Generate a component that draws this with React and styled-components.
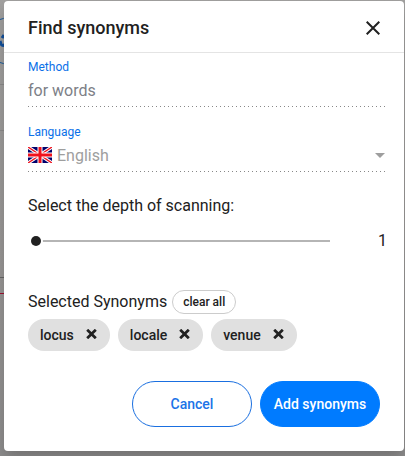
import React, { useState } from "react";
import styled, { createGlobalStyle } from "styled-components";

const GlobalStyle = createGlobalStyle`
  * {
    box-sizing: border-box;
  }

  body {
    margin: 0;
    background: #8b8988;
    color: #212121;
    font-family: Roboto, "Liberation Sans", sans-serif;
  }

  button, input, select {
    font-family: inherit;
  }
`;

const Backdrop = styled.div`
  position: relative;
  min-height: 100vh;
  padding: 1px 1px 5px 4px;
  overflow: hidden;
  background: linear-gradient(#a2a1a0, #999796 60%, #8f8e8e);
`;

// page content that shows at the edge of the dialog
const PageEdge = styled.svg`
  position: absolute;
  top: 0;
  left: 0;
`;

const Dialog = styled.section`
  position: relative;
  background: #fff;
  border-radius: 4px;
  box-shadow: 0 8px 16px rgba(0, 0, 0, 0.2);
`;

const Header = styled.header`
  display: flex;
  align-items: center;
  justify-content: space-between;
  height: 52px;
  padding: 2px 24px 0;
  border-bottom: 1px solid #e4e4e4;
`;

const Title = styled.h2`
  margin: 0;
  font-size: 18px;
  font-weight: 500;
  line-height: 24px;
`;

const CloseButton = styled.button`
  display: flex;
  padding: 0;
  border: 0;
  background: none;
  color: #212121;
  cursor: pointer;
`;

const Body = styled.div`
  padding: 6px 17px 0 24px;
`;

const Field = styled.div`
  padding-bottom: 6px;
  margin-bottom: 17px;
  background: repeating-linear-gradient(to right, #888 0 1px, transparent 1px 4px) bottom / 100% 1px no-repeat;
`;

const FieldLabel = styled.label`
  display: block;
  font-size: 12px;
  line-height: 16px;
  color: #0a70e8;
`;

const FieldRow = styled.div`
  display: flex;
  align-items: center;
  gap: 5px;
  height: 22px;
  margin-top: 4px;
`;

const TextInput = styled.input`
  flex: 1;
  min-width: 0;
  padding: 0;
  border: 0;
  background: none;
  font-size: 16px;
  color: #7d8087;
`;

const Select = styled.select`
  flex: 1;
  min-width: 0;
  padding: 0;
  border: 0;
  appearance: none;
  background: none;
  font-size: 16px;
  color: #9e9e9e;
  opacity: 1;
`;

const Arrow = styled.svg`
  margin-right: 2px;
`;

const Text = styled.label`
  display: block;
  font-size: 16px;
  line-height: 24px;
`;

const Scanning = styled.div`
  padding-top: 5px;
`;

const SliderRow = styled.div`
  display: flex;
  align-items: center;
  justify-content: space-between;
  height: 46px;
  padding-left: 3px;
`;

const Slider = styled.input`
  appearance: none;
  width: 84%;
  height: 20px;
  margin: 0;
  background: linear-gradient(#b5b5b5, #b5b5b5) center / 100% 2px no-repeat;

  &::-webkit-slider-thumb {
    appearance: none;
    width: 10px;
    height: 10px;
    border-radius: 50%;
    background: #212121;
    box-shadow: 0 0 0 2px #fff;
  }
`;

const Depth = styled.output`
  font-size: 16px;
  line-height: 24px;
`;

const Selected = styled.div`
  display: flex;
  align-items: center;
  gap: 5px;
  margin-top: 26px;
`;

const ClearButton = styled.button`
  height: 24px;
  padding: 0 10px;
  border: 1px solid #ccc;
  border-radius: 12px;
  background: #fff;
  font-size: 12px;
  font-weight: 500;
  color: #212121;
  cursor: pointer;
`;

const Chips = styled.div`
  display: flex;
  flex-wrap: wrap;
  gap: 8px;
  min-height: 32px;
  margin-top: 5px;
`;

const Chip = styled.span`
  display: flex;
  align-items: center;
  gap: 12px;
  height: 32px;
  padding: 0 13px 0 12px;
  border-radius: 16px;
  background: #e0e0e0;
  font-size: 14px;
  font-weight: 500;
`;

const RemoveButton = styled.button`
  display: flex;
  padding: 0 0 2px;
  border: 0;
  background: none;
  color: #212121;
  cursor: pointer;
`;

const Actions = styled.footer`
  display: flex;
  justify-content: flex-end;
  gap: 8px;
  padding: 30px 24px 24px;
`;

const ActionButton = styled.button`
  width: 120px;
  height: 46px;
  padding: 0;
  border: 1px solid ${({ $primary }) => ($primary ? "#007bff" : "#1a6fe0")};
  border-radius: 23px;
  background: ${({ $primary }) => ($primary ? "#007bff" : "#fff")};
  color: ${({ $primary }) => ($primary ? "#fff" : "#1a73e8")};
  font-size: 14px;
  font-weight: 500;
  cursor: pointer;
`;

const Flag = () => (
  <svg width="24" height="16" viewBox="0 0 24 16" aria-hidden="true">
    <path fill="#00006b" d="M0 0h24v16H0z" />
    <path stroke="#fff" strokeWidth="3.4" d="M0 0l24 16M24 0L0 16" />
    <path stroke="#f0101c" strokeWidth="1.4" d="M0 0l24 16M24 0L0 16" />
    <path stroke="#fff" strokeWidth="5" d="M12 0v16M0 8h24" />
    <path stroke="#f0101c" strokeWidth="3" d="M12 0v16M0 8h24" />
  </svg>
);

const App = () => {
  const [depth, setDepth] = useState(1);
  const [words, setWords] = useState(["locus", "locale", "venue"]);

  return (
    <>
      <GlobalStyle />
      <Backdrop>
        <PageEdge width="4" height="300" aria-hidden="true">
          <circle cx="8" cy="41" r="23" fill="none" stroke="#1c5c9c" />
          <path stroke="#12509c" strokeWidth="3" fill="none" d="M0 41l1 3q2 3 4 0M2 38l2-3" />
          <path stroke="#8c8b8b" d="M0 84.5h4M0 130.5h4" />
          <path stroke="#666" d="M0 277.5h4" />
          <path stroke="#a01030" d="M0 293.5h4" />
        </PageEdge>
        <Dialog role="dialog" aria-labelledby="title">
          <Header>
            <Title id="title">Find synonyms</Title>
            <CloseButton aria-label="Close">
              <svg width="14" height="14" viewBox="0 0 14 14">
                <path stroke="currentColor" strokeWidth="2" d="M.7.7l12.6 12.6M13.3.7L.7 13.3" />
              </svg>
            </CloseButton>
          </Header>
          <Body>
            <Field>
              <FieldLabel htmlFor="method">Method</FieldLabel>
              <FieldRow>
                <TextInput id="method" value="for words" disabled readOnly />
              </FieldRow>
            </Field>
            <Field>
              <FieldLabel htmlFor="language">Language</FieldLabel>
              <FieldRow>
                <Flag />
                <Select id="language" disabled>
                  <option>English</option>
                </Select>
                <Arrow width="10" height="5" viewBox="0 0 10 5" aria-hidden="true">
                  <path fill="#9e9e9e" d="M0 0h10L5 5z" />
                </Arrow>
              </FieldRow>
            </Field>
            <Scanning>
              <Text htmlFor="depth">Select the depth of scanning:</Text>
              <SliderRow>
                <Slider
                  id="depth"
                  type="range"
                  min="1"
                  max="5"
                  value={depth}
                  onChange={(e) => setDepth(Number(e.target.value))}
                />
                <Depth htmlFor="depth">{depth}</Depth>
              </SliderRow>
            </Scanning>
            <Selected>
              <Text as="span">Selected Synonyms</Text>
              <ClearButton onClick={() => setWords([])}>clear all</ClearButton>
            </Selected>
            <Chips>
              {words.map((word) => (
                <Chip key={word}>
                  {word}
                  <RemoveButton
                    aria-label={`Remove ${word}`}
                    onClick={() => setWords(words.filter((w) => w !== word))}
                  >
                    <svg width="11" height="10" viewBox="0 0 11 10">
                      <path stroke="currentColor" strokeWidth="2.8" d="M1.2.8l8.6 8.4M9.8.8L1.2 9.2" />
                    </svg>
                  </RemoveButton>
                </Chip>
              ))}
            </Chips>
          </Body>
          <Actions>
            <ActionButton>Cancel</ActionButton>
            <ActionButton $primary>Add synonyms</ActionButton>
          </Actions>
        </Dialog>
      </Backdrop>
    </>
  );
};

export default App;
